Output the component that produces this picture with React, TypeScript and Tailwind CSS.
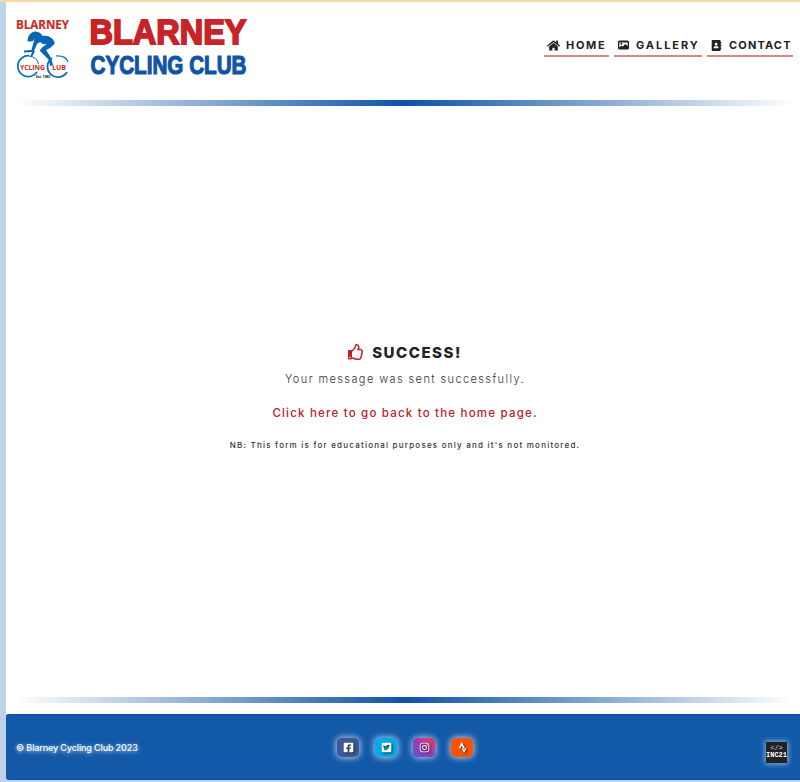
import React from "react";
import { FaHome, FaRegThumbsUp, FaAddressBook, FaFacebookSquare, FaTwitterSquare, FaInstagram, FaStrava } from "react-icons/fa";

const SANS = "font-['Inter','Liberation_Sans',sans-serif]";

function Emblem() {
  return (
    <svg width="54" height="60" viewBox="0 0 54 60" className="shrink-0 overflow-visible">
      <text x="0" y="10" textLength="53" lengthAdjust="spacingAndGlyphs" fontFamily="Open Sans, sans-serif" fontWeight="700" fontSize="12.5" fill="#cc2a25" stroke="#cc2a25" strokeWidth=".2">BLARNEY</text>
      <g fill="none" stroke="#0d6fb8">
        <path d="M13 36.700A10.500 10.500 0 1 0 21 53" strokeWidth="1.8" />
        <path d="M13 37Q21 38 22.500 45" strokeWidth="1" />
        <path d="M36 39A10.500 10.500 0 1 0 51 53" strokeWidth="1.8" />
        <path d="M40 37Q50 36.500 52 43" strokeWidth="1.200" />
      </g>
      <g fill="#0867b5">
        <path d="M11.500 22C12 15 16 12.500 20 12.500Q24 13 26.500 16.500L24 19L20 18L17 22Q13 23 11.500 22Z" />
        <path d="M19 18Q25 16 32 17Q39 20 38.500 25Q35 29 30 31L34 37Q36 41 37 46L34 47L33 41L24 32Q24 29 31 25Q27 26 24 23L21 25L17.500 33L8 33.500V31.500L15.500 31Z" />
        <path d="M17 31L19 32L16 38H14Z" />
      </g>
      <text x="4" y="50.500" textLength="25" lengthAdjust="spacingAndGlyphs" fontFamily="Open Sans, sans-serif" fontWeight="700" fontSize="7.5" fill="#cc2a25">YCLING</text>
      <text x="36" y="50.500" textLength="14" lengthAdjust="spacingAndGlyphs" fontFamily="Open Sans, sans-serif" fontWeight="700" fontSize="7.5" fill="#cc2a25">LUB</text>
      <text x="20" y="59" textLength="14" lengthAdjust="spacingAndGlyphs" fontFamily="Open Sans, sans-serif" fontWeight="700" fontSize="4" fill="#111">Est. 1980</text>
    </svg>
  );
}

function Wordmark() {
  return (
    <svg width="160" height="60" viewBox="0 0 160 60" className="ml-[18px] shrink-0 overflow-visible">
      <g fontFamily="Liberation Sans, sans-serif" fontWeight="700">
        <text x="1.500" y="25" textLength="157" lengthAdjust="spacingAndGlyphs" fontSize="34.500" fill="#c92328" stroke="#c92328" strokeWidth="1.8">BLARNEY</text>
        <text x="2.500" y="54.700" textLength="156" lengthAdjust="spacingAndGlyphs" fontSize="25.500" fill="#1054a7" stroke="#1054a7" strokeWidth="1.2">CYCLING CLUB</text>
      </g>
    </svg>
  );
}

function ImageIcon() {
  return (
    <svg width="11" height="10" viewBox="0 0 11 10" fill="currentColor">
      <path fillRule="evenodd" d="M1.500 .5H9.500Q11 .5 11 2V8Q11 9.500 9.500 9.500H1.500Q0 9.500 0 8V2Q0 .5 1.500 .5ZM1.300 2.500V7.500L3.500 5.500L4.800 6.500L7.300 4L9.700 6V2.500Z" />
      <circle cx="3.300" cy="3.700" r="1" />
    </svg>
  );
}

function NavLink({ icon, label, width, spacing }: { icon: React.ReactNode; label: string; width: string; spacing: string }) {
  return (
    <a className={`flex h-[22px] items-center border-b-2 border-[#dc8587] pl-[3px] font-bold text-[#222] ${width}`}>
      <span className="flex w-[13px] justify-center">{icon}</span>
      <span className={`-mt-px ml-[6px] text-[11px] leading-4 whitespace-nowrap ${spacing}`}>{label}</span>
    </a>
  );
}

function Divider() {
  return <div className="mr-1.5 ml-2.5 h-1.5 bg-linear-to-r from-transparent via-[#0e53a7] to-transparent" />;
}

function Social({ color, children }: { color: string; children: React.ReactNode }) {
  return (
    <a className={`flex h-[19px] w-[22px] items-center justify-center rounded-[5px] text-[11px] text-white shadow-[0_0_6px_1px_#b3c9e4] ${color}`}>
      <span className="drop-shadow-[1px_1px_1px_#222]">{children}</span>
    </a>
  );
}

export default function App() {
  return (
    <div className={`flex h-[782px] w-[800px] flex-col overflow-hidden border-t-2 border-[#fad5a5] bg-[#bfd2e9] pl-1.5 ${SANS}`}>
      <main className="flex h-[712px] shrink-0 flex-col bg-white">
        <header className="flex h-[98px] shrink-0 items-start pt-[17px] pl-2.5">
          <Emblem />
          <Wordmark />
          <nav className="mt-[16px] mr-[7px] ml-auto flex gap-[5px]">
            <NavLink icon={<FaHome size={13} />} label="HOME" width="w-[65px]" spacing="tracking-[1.700px]" />
            <NavLink icon={<ImageIcon />} label="GALLERY" width="w-[88px]" spacing="tracking-[1.950px]" />
            <NavLink icon={<FaAddressBook size={11} />} label="CONTACT" width="w-[86px]" spacing="tracking-[1.150px]" />
          </nav>
        </header>
        <Divider />
        <section className="flex grow flex-col items-center pt-[236px] pl-1">
          <h1 className="flex h-5 items-center text-[15px] leading-5 font-extrabold tracking-[1.530px] text-[#222]">
            <FaRegThumbsUp size={16} className="mr-2 text-[#c51f25]" />
            <span className="pt-[2px]">SUCCESS!</span>
          </h1>
          <p className="mt-[9px] h-4 whitespace-nowrap text-[11px] leading-4 font-light tracking-[1.400px] text-[#333]">Your message was sent successfully.</p>
          <a className="mt-[18px] h-4 whitespace-nowrap text-[11.500px] leading-4 font-medium tracking-[1.200px] text-[#bd2027]">Click here to go back to the home page.</a>
          <p className="mt-[18px] h-3 whitespace-nowrap text-[8px] leading-3 font-medium tracking-[1.220px] text-[#333]">NB: This form is for educational purposes only and it's not monitored.</p>
        </section>
        <Divider />
        <div className="h-[11px] shrink-0" />
      </main>
      <footer className="grid h-[66px] shrink-0 grid-cols-[1fr_auto_1fr] items-center rounded-l-[3px] border-y border-[#0750a9] bg-[#1259a8] pr-[13px] pl-2.5">
        <span className="mt-px text-[9px] font-medium tracking-[-.13px] whitespace-nowrap text-white [text-shadow:0_1px_4px_#dbe8fa]">© Blarney Cycling Club 2023</span>
        <div className="flex gap-4 pl-[7px]">
          <Social color="bg-[#3b5998]"><FaFacebookSquare /></Social>
          <Social color="bg-[#00acee]"><FaTwitterSquare /></Social>
          <Social color="bg-linear-to-tr from-[#5851db] via-[#a337b4] to-[#fd1d4d]"><FaInstagram /></Social>
          <Social color="bg-[#fc5200]"><FaStrava /></Social>
        </div>
        <div className="mt-[10px] flex h-[21px] w-[21px] flex-col items-center justify-center justify-self-end overflow-hidden bg-[#222] font-['Liberation_Mono',monospace] text-white shadow-[0_0_5px_1px_#8bb1df]">
          <span className="text-[7px] leading-[7px] text-[#ddd]">&lt;/&gt;</span>
          <span className="text-[7px] leading-[7px] font-bold">INC21</span>
        </div>
      </footer>
    </div>
  );
}
